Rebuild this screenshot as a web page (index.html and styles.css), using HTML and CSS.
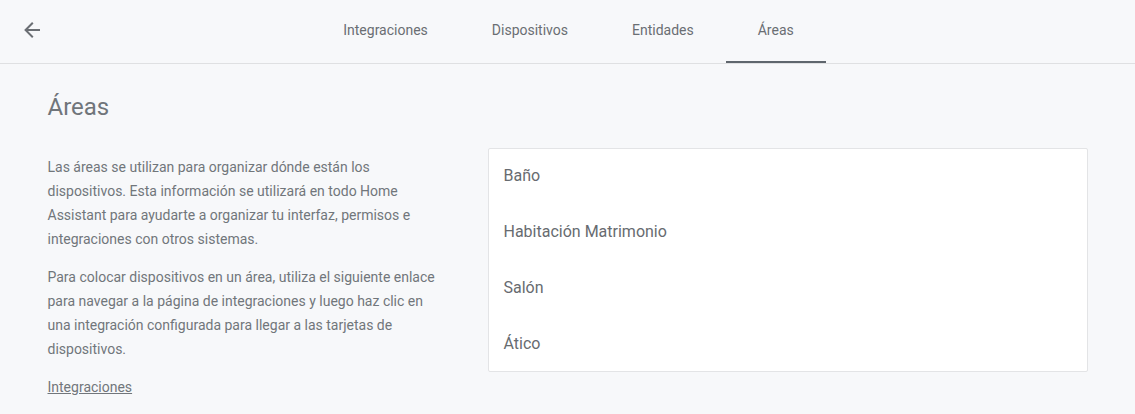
FILE: index.html
```html
<!DOCTYPE html>
<html lang="es">
<head>
<meta charset="utf-8">
<link rel="stylesheet" href="styles.css">
</head>
<body>
<header class="toolbar">
  <button class="back" aria-label="Atrás">
    <svg viewBox="0 0 24 24" width="24" height="24"><path d="M20,11V13H8L13.5,18.5L12.08,19.92L4.16,12L12.08,4.08L13.5,5.5L8,11H20Z"/></svg>
  </button>
  <nav class="tabs">
    <a class="tab">Integraciones</a>
    <a class="tab">Dispositivos</a>
    <a class="tab">Entidades</a>
    <a class="tab active">Áreas</a>
  </nav>
</header>
<main class="section">
  <h1 class="title">Áreas</h1>
  <div class="together">
    <div class="intro">
      <p>Las áreas se utilizan para organizar dónde están los dispositivos. Esta información se utilizará en todo Home Assistant para ayudarte a organizar tu interfaz, permisos e integraciones con otros sistemas.</p>
      <p>Para colocar dispositivos en un área, utiliza el siguiente enlace para navegar a la página de integraciones y luego haz clic en una integración configurada para llegar a las tarjetas de dispositivos.</p>
      <p><a class="link">Integraciones</a></p>
    </div>
    <div class="card">
      <div class="item">Baño</div>
      <div class="item">Habitación Matrimonio</div>
      <div class="item">Salón</div>
      <div class="item">Ático</div>
    </div>
  </div>
</main>
</body>
</html>
```

FILE: styles.css
```css
html, body {
  margin: 0;
  padding: 0;
  background: #f7f8fa;
  font-family: Roboto, "Liberation Sans", sans-serif;
  color: #6b6f74;
}
.toolbar {
  height: 63px;
  border-bottom: 1px solid #dfe0e2;
  display: flex;
  justify-content: center;
  position: relative;
}
.back {
  position: absolute;
  left: 12px;
  top: 10px;
  width: 40px;
  height: 40px;
  padding: 8px;
  border: 0;
  background: none;
  fill: #6b6f74;
}
.back svg { display: block; }
.tabs {
  display: flex;
  height: 63px;
  margin-left: 2px;
}
.tab {
  padding: 0 32px;
  font-size: 14px;
  line-height: 60px;
  color: #6a6e73;
  border-bottom: 3px solid transparent;
  box-sizing: border-box;
  height: 63px;
}
.tab.active {
  border-bottom: 2px solid #5f666d;
  line-height: 61px;
}
.section {
  width: 1040px;
  margin: 0 auto;
  padding-top: 27px;
}
.title {
  margin: 0;
  font-size: 24px;
  line-height: 32px;
  font-weight: 400;
  color: #70757a;
}
.together {
  display: flex;
  margin-top: 25px;
}
.intro {
  width: 400px;
  margin-right: 40px;
  padding-top: 7px;
  font-size: 14px;
  line-height: 24px;
  color: #71767b;
}
.intro p {
  margin: 0 0 14px;
}
.link {
  text-decoration: underline;
  color: #71767b;
}
.card {
  width: 600px;
  box-sizing: border-box;
  height: 224px;
  background: #fff;
  border: 1px solid #e3e4e6;
  border-radius: 2px;
}
.item {
  height: 56px;
  line-height: 54px;
  padding: 0 15px;
  font-size: 16px;
  color: #676b70;
}
```
